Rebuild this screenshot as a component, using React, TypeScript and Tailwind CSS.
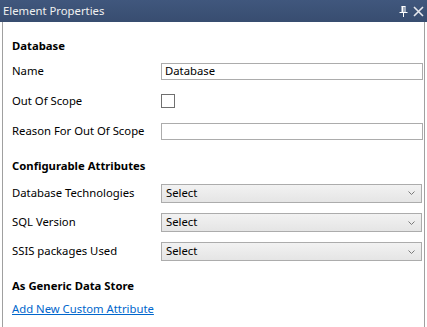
import React from "react";

const font = { fontFamily: '"Segoe UI", "Noto Sans", "Open Sans", sans-serif' };

function Select() {
  return (
    <div className="flex h-[19px] w-[261px] items-center justify-between border border-[#acacac] bg-gradient-to-b from-[#f2f2f2] to-[#e5e5e5] pl-[4px] pr-[6px] text-[11.3px] text-black">
      <span>Select</span>
      <svg width="7" height="5" viewBox="0 0 7 5" className="mt-[1px]">
        <path d="M0.5 0.5 L3.5 3.5 L6.5 0.5" fill="none" stroke="#7a7a7a" strokeWidth="1" />
      </svg>
    </div>
  );
}

function Row({ label, children, h = "h-[30px]" }: { label: string; children?: React.ReactNode; h?: string }) {
  return (
    <div className={`flex ${h} items-center`}>
      <div className="w-[149px] shrink-0 text-[11.3px] text-black">{label}</div>
      {children}
    </div>
  );
}

export default function App() {
  return (
    <div className="h-[327px] w-[427px] overflow-hidden bg-white" style={font}>
      <div className="flex h-[22px] items-center justify-between bg-gradient-to-b from-[#40577d] to-[#384d70] pl-[3px] pr-[3px]">
        <span className="text-[11.3px] text-[#f0f0f0]">Element Properties</span>
        <div className="flex items-center gap-[5px]">
          <svg width="9" height="11" viewBox="0 0 9 11">
            <path d="M2.5 0.5 H6.5 M3 0.5 V6 M6 0.5 V6 M0.5 6.5 H8.5 M4.5 6.5 V11" fill="none" stroke="#ffffff" strokeWidth="1" />
            <rect x="3" y="0.5" width="1.5" height="6" fill="#ffffff" />
          </svg>
          <svg width="11" height="11" viewBox="0 0 11 11">
            <path d="M1 1 L10 10 M10 1 L1 10" fill="none" stroke="#e6e8ee" strokeWidth="1.6" />
          </svg>
        </div>
      </div>
      <div className="ml-[2px] mr-[2px] h-[305px] border-x border-[#a0a0a0] pl-[9px] pt-[14px]">
        <div className="flex h-[20px] items-center text-[11.3px] font-bold text-black">Database</div>
        <Row label="Name">
          <div className="flex h-[17px] w-[262px] items-center border border-[#acacac] bg-white pl-[3px] text-[11.3px] text-black">
            Database
          </div>
        </Row>
        <Row label="Out Of Scope">
          <div className="h-[14px] w-[14px] border border-[#707070] bg-white" />
        </Row>
        <Row label="Reason For Out Of Scope">
          <div className="h-[17px] w-[262px] border border-[#acacac] bg-white" />
        </Row>
        <div className="mt-[10px] flex h-[20px] items-center text-[11.3px] font-bold text-black">Configurable Attributes</div>
        <div className="mt-[2px]">
          <Row label="Database Technologies">
            <Select />
          </Row>
          <Row label="SQL Version" h="h-[29px]">
            <Select />
          </Row>
          <Row label="SSIS packages Used" h="h-[29px]">
            <Select />
          </Row>
        </div>
        <div className="mt-[10px] flex h-[20px] items-center text-[11.3px] font-bold text-black">As Generic Data Store</div>
        <div className="mt-[3px] flex h-[20px] items-center text-[11.3px] text-[#0066cc] underline">Add New Custom Attribute</div>
      </div>
    </div>
  );
}
